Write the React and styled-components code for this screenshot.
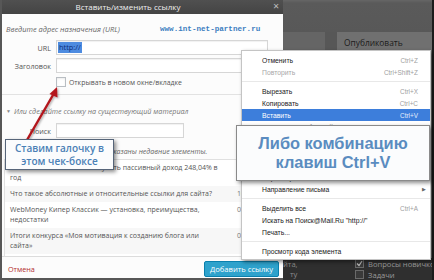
import React from 'react';
import styled, { createGlobalStyle } from 'styled-components';

const Global = createGlobalStyle`
  html, body { margin: 0; padding: 0; background: #575757; }
  body { width: 434px; height: 280px; overflow: hidden; font-family: "Open Sans", "Liberation Sans", sans-serif; }
  * { box-sizing: border-box; }
`;

const Page = styled.div`
  position: relative;
  width: 434px;
  height: 280px;
  overflow: hidden;
  display: flex;
  align-items: flex-start;
  padding-left: 2px;
  background: #575757;
`;

const Dialog = styled.div`
  width: 281px;
  height: 278px;
  flex: none;
  display: flex;
  flex-direction: column;
  background: #fcfcfc;
`;

const TitleBar = styled.div`
  height: 14px;
  flex: none;
  display: grid;
  grid-template-columns: 1fr 14px;
  align-items: center;
  background: linear-gradient(#505050, #444);
  color: #f0f0f0;
`;

const Title = styled.div`
  font-size: 8px;
  text-align: center;
  padding-right: 15px;
  line-height: 14px;
`;

const Close = styled.div`
  font-family: "DejaVu Sans", sans-serif;
  font-size: 8px;
  font-weight: bold;
  color: #bbb;
  text-align: center;
  line-height: 14px;
`;

const HeaderRow = styled.div`
  display: grid;
  grid-template-columns: 154px auto;
  align-items: center;
  height: 10px;
  margin: 10px 0 0 4px;
`;

const Hint = styled.div`
  font-size: 7.4px;
  font-style: italic;
  color: #666;
  white-space: nowrap;
`;

const Watermark = styled.div`
  font-family: "Liberation Mono", monospace;
  font-weight: bold;
  font-size: 7.6px;
  color: #3b7dbf;
  white-space: nowrap;
`;

const FieldRow = styled.div`
  display: grid;
  grid-template-columns: 50px auto;
  align-items: center;
  margin: ${p => p.$mt}px 0 0 4px;
`;

const Label = styled.div`
  font-size: 7.2px;
  color: #555;
  text-align: right;
  padding-right: 5px;
`;

const Input = styled.div`
  width: ${p => p.$w}px;
  height: 15px;
  background: #fff;
  border: 1px solid #d6d6d6;
  box-shadow: inset 0 1px 1px rgba(0,0,0,.06);
  display: flex;
  align-items: center;
  padding-left: 1px;
`;

const Selected = styled.span`
  background: #4d8be0;
  color: #0d2d78;
  font-size: 7.4px;
  line-height: 11px;
  padding: 0 1px;
`;

const CheckRow = styled.div`
  display: flex;
  align-items: center;
  gap: 3px;
  margin: 4px 0 0 54px;
`;

const Box = styled.div`
  width: 10px;
  height: 10px;
  background: #fff;
  border: 1px solid #b9bec3;
  box-shadow: inset 0 1px 2px rgba(0,0,0,.08);
`;

const CheckLabel = styled.div`
  font-size: 6.9px;
  color: #555;
`;

const Divider = styled.div`
  height: 1px;
  background: #e2e2e2;
  margin-top: 7px;
`;

const Toggle = styled.div`
  display: flex;
  align-items: center;
  gap: 3px;
  height: 10px;
  margin: 11px 0 0 4px;
  font-size: 7.2px;
  font-style: italic;
  color: #777;
  white-space: nowrap;
`;

const Tri = styled.span`
  font-size: 5px;
  font-style: normal;
  color: #888;
`;

const Info = styled.div`
  margin: 9px 0 0 6px;
  height: 10px;
  font-size: 7px;
  font-style: italic;
  color: #666;
  white-space: nowrap;
`;

const ListBox = styled.div`
  flex: 1;
  min-height: 0;
  overflow: hidden;
  margin: 2px 2px 0 2px;
  border: 1px solid #e0e0e0;
  border-bottom: none;
  background: #fff;
`;

const Item = styled.div`
  display: grid;
  grid-template-columns: 227px auto;
  padding: 3px 0 3px 5px;
  background: ${p => (p.$alt ? '#f7f7f7' : '#fff')};
  font-size: 7px;
  line-height: 10px;
  color: #555;
`;

const ItemTitle = styled.div`
  padding-right: 17px;
`;

const ItemDate = styled.div`
  white-space: nowrap;
  color: #777;
`;

const Footer = styled.div`
  height: 22px;
  flex: none;
  display: flex;
  align-items: center;
  justify-content: space-between;
  padding: 2px 4px 0 6px;
  border-top: 1px solid #dcdcdc;
  background: #fcfcfc;
`;

const Cancel = styled.div`
  font-size: 7.2px;
  color: #b32d2e;
`;

const Primary = styled.div`
  height: 16px;
  padding: 0 5px;
  display: flex;
  align-items: center;
  background: #2ea2cc;
  border: 1px solid #0a80ad;
  border-radius: 2px;
  color: #fff;
  font-size: 7.6px;
  white-space: nowrap;
`;

const RightPane = styled.div`
  flex: 1;
  height: 280px;
  display: flex;
  flex-direction: column;
  border-right: 2px solid #1c1c1c;
`;

const TopStrip = styled.div`
  height: 32px;
  flex: none;
  background: linear-gradient(#666 0, #5a5a5a 3px, #585858);
`;

const PanelRow = styled.div`
  flex: 1;
  display: grid;
  grid-template-columns: 42px 12px 1fr;
  background: #585858;
`;

const SidePanel = styled.div`
  background: ${p => p.$bg};
  color: #1b1b1b;
  font-size: 8.4px;
  padding: 5px 0 0 7px;
  white-space: nowrap;
`;

const BottomStrip = styled.div`
  height: 22px;
  flex: none;
  display: grid;
  grid-template-columns: 72px 1fr;
  background: #2f2f2f;
  color: #8d8d8d;
  font-size: 7.6px;
  overflow: hidden;
`;

const Tail = styled.div`
  display: flex;
  flex-direction: column;
  padding-top: 1px;
  line-height: 10px;
`;

const TailLine = styled.div`
  padding-left: ${p => p.$pl}px;
`;

const Cats = styled.div`
  display: flex;
  flex-direction: column;
  gap: 2px;
  padding-top: 1px;
  overflow: hidden;
`;

const Cat = styled.div`
  display: flex;
  align-items: center;
  gap: 4px;
  height: 9px;
  color: #9a9a9a;
  white-space: nowrap;
`;

const CatBox = styled.div`
  width: 9px;
  height: 9px;
  flex: none;
  border: 1px solid #6a6a6a;
  background: #3a3a3a;
  display: flex;
  align-items: center;
  justify-content: center;
`;

const Menu = styled.div`
  position: absolute;
  left: 241px;
  top: 50px;
  width: 190px;
  padding: 3px 0 2px;
  background: #fff;
  border: 1px solid #c4c4c4;
  box-shadow: 2px 2px 4px rgba(0,0,0,.45);
  font-family: "Liberation Sans", Arial, sans-serif;
`;

const MenuRow = styled.div`
  height: 12px;
  display: grid;
  grid-template-columns: 1fr auto 12px;
  align-items: center;
  padding: 0 0 0 20px;
  font-size: 6.8px;
  white-space: nowrap;
  background: ${p => (p.$hl ? '#3d7edb' : 'transparent')};
  color: ${p => (p.$hl ? '#fff' : p.$off ? '#a8a8a8' : '#222')};
`;

const Shortcut = styled.span`
  font-size: 6.4px;
  color: ${p => (p.$hl ? '#e6eefc' : '#a0a0a0')};
`;

const Sub = styled.span`
  font-size: 5px;
  color: #666;
  text-align: center;
`;

const MenuSep = styled.div`
  height: 7px;
  display: flex;
  align-items: center;
  &::after {
    content: '';
    flex: 1;
    height: 1px;
    background: #e8e8e8;
  }
`;

const Callout = styled.div`
  position: absolute;
  left: ${p => p.$x}px;
  top: ${p => p.$y}px;
  width: ${p => p.$w}px;
  height: ${p => p.$h}px;
  display: flex;
  flex-direction: column;
  align-items: center;
  justify-content: center;
  background: #fbfcfd;
  border: 1px solid ${p => p.$border};
  box-shadow: 2px 2px 4px rgba(0,0,0,.45);
  text-align: center;
`;

const SmallNote = styled.div`
  font-family: "Open Sans", sans-serif;
  font-weight: 600;
  font-size: 10px;
  line-height: 12.5px;
  color: #4a80b6;
`;

const BigNote = styled.div`
  font-family: "Liberation Sans", Arial, sans-serif;
  font-weight: bold;
  font-size: 16.4px;
  line-height: 19px;
  color: #5a8cc0;
`;

const Arrow = styled.svg`
  position: absolute;
  left: 0;
  top: 0;
  pointer-events: none;
`;

const menu = [
  { t: 'Отменить', k: 'Ctrl+Z' },
  { t: 'Повторить', k: 'Ctrl+Shift+Z', off: true },
  'sep',
  { t: 'Вырезать', k: 'Ctrl+X' },
  { t: 'Копировать', k: 'Ctrl+C' },
  { t: 'Вставить', k: 'Ctrl+V', hl: true },
  { t: 'Вставить как обычный текст', k: 'Ctrl+Shift+V' },
  { t: 'Удалить' },
  'sep',
  { t: 'Проверка правописания', sub: true },
  'sep',
  { t: 'Параметры языка', sub: true },
  { t: 'Направление письма', sub: true },
  'sep',
  { t: 'Выделить все', k: 'Ctrl+A' },
  { t: 'Искать на Поиск@Mail.Ru "http://"' },
  { t: 'Печать...' },
  'sep',
  { t: 'Просмотр кода элемента' },
];

const items = [
  ['Как я начал стабильно получать пассивный доход 248,04% в год', '18.03.2014'],
  ['Что такое абсолютные и относительные ссылки для сайта?', '10.03.2014'],
  ['WebMoney Кипер Классик — установка, преимущества, недостатки', '06.03.2014'],
  ['Итоги конкурса «Моя мотивация к созданию блога или сайта»', '03.03.2014'],
  ['Что такое Аякс?', '17.02.2014'],
];

export default function App() {
  return (
    <>
      <Global />
      <Page>
        <Dialog>
          <TitleBar>
            <Title>Вставить/изменить ссылку</Title>
            <Close>✕</Close>
          </TitleBar>
          <HeaderRow>
            <Hint>Введите адрес назначения (URL)</Hint>
            <Watermark>www.int-net-partner.ru</Watermark>
          </HeaderRow>
          <FieldRow $mt={6}>
            <Label>URL</Label>
            <Input $w={212}><Selected>http://</Selected></Input>
          </FieldRow>
          <FieldRow $mt={3}>
            <Label>Заголовок</Label>
            <Input $w={212} />
          </FieldRow>
          <CheckRow>
            <Box />
            <CheckLabel>Открывать в новом окне/вкладке</CheckLabel>
          </CheckRow>
          <Divider />
          <Toggle><Tri>▼</Tri>Или сделайте ссылку на существующий материал</Toggle>
          <FieldRow $mt={7}>
            <Label>Поиск</Label>
            <Input $w={128} />
          </FieldRow>
          <Info>Не указан поисковый запрос. Показаны недавние элементы.</Info>
          <ListBox>
            {items.map(([t, d], i) => (
              <Item key={t} $alt={i % 2 === 1}>
                <ItemTitle>{t}</ItemTitle>
                <ItemDate>{d}</ItemDate>
              </Item>
            ))}
          </ListBox>
          <Footer>
            <Cancel>Отмена</Cancel>
            <Primary>Добавить ссылку</Primary>
          </Footer>
        </Dialog>
        <RightPane>
          <TopStrip />
          <PanelRow>
            <SidePanel $bg="#656565" />
            <SidePanel $bg="#575757" />
            <SidePanel $bg="#707070">Опубликовать</SidePanel>
          </PanelRow>
          <BottomStrip>
            <Tail>
              <TailLine $pl={0}>йта,</TailLine>
              <TailLine $pl={7}>ту</TailLine>
            </Tail>
            <Cats>
              <Cat>
                <CatBox>
                  <svg width="7" height="7" viewBox="0 0 7 7"><path d="M1 3.5 L3 5.5 L6 1" fill="none" stroke="#bbb" strokeWidth="1.2" /></svg>
                </CatBox>
                Вопросы новичков
              </Cat>
              <Cat><CatBox />Задачи</Cat>
            </Cats>
          </BottomStrip>
        </RightPane>

        <Menu>
          {menu.map((m, i) =>
            m === 'sep' ? (
              <MenuSep key={i} />
            ) : (
              <MenuRow key={i} $hl={m.hl} $off={m.off}>
                <span>{m.t}</span>
                <Shortcut $hl={m.hl}>{m.k || ''}</Shortcut>
                <Sub>{m.sub ? '▶' : ''}</Sub>
              </MenuRow>
            )
          )}
        </Menu>

        <Arrow width="80" height="150" viewBox="0 0 80 150">
          <defs>
            <filter id="sh" x="-50%" y="-50%" width="200%" height="200%">
              <feDropShadow dx="1" dy="1" stdDeviation="0.8" floodColor="#000" floodOpacity="0.35" />
            </filter>
          </defs>
          <g filter="url(#sh)">
            <line x1="27" y1="140" x2="53" y2="95" stroke="#b3161d" strokeWidth="2.4" strokeLinecap="round" />
            <path d="M57 87 L49.5 94 L57.5 97.5 Z" fill="#b3161d" />
          </g>
        </Arrow>

        <Callout $x={5} $y={139} $w={109} $h={31} $border="#566579">
          <SmallNote>Ставим галочку в</SmallNote>
          <SmallNote>этом чек-боксе</SmallNote>
        </Callout>

        <Callout $x={236} $y={125} $w={194} $h={56} $border="#8a8a8a">
          <BigNote>Либо комбинацию</BigNote>
          <BigNote>клавиш Ctrl+V</BigNote>
        </Callout>
      </Page>
    </>
  );
}
